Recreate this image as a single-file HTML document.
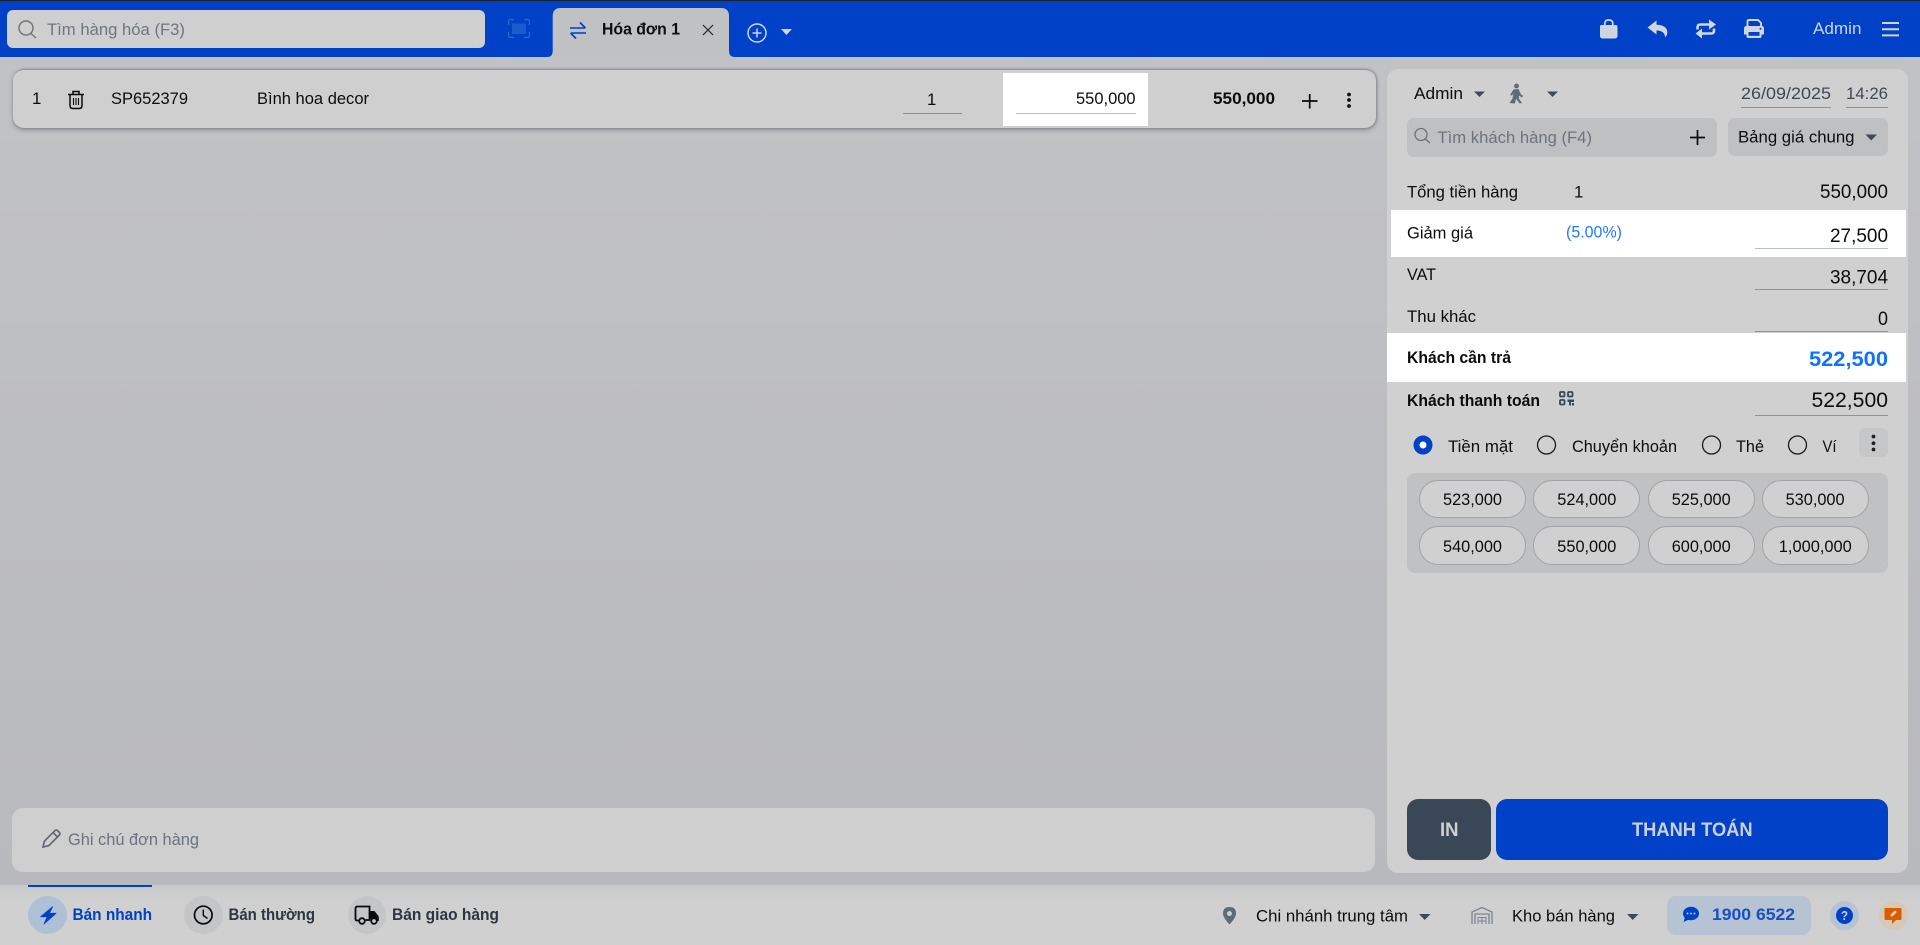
<!DOCTYPE html>
<html lang="vi"><head><meta charset="utf-8"><title>Hóa đơn 1</title>
<style>
html,body{margin:0;padding:0;width:1920px;height:945px;overflow:hidden;background:#bfc0c2}
.b{position:absolute;box-sizing:border-box}
svg{position:absolute;left:0;top:0}
text{font-family:"Liberation Sans","Noto Sans CJK SC",sans-serif;font-size:16.8px;fill:#0c0c0c}
.bd{font-weight:700}
.l{font-size:19px}
.pill{position:absolute;width:107px;height:38px;border:1px solid #a2a3a7;border-radius:19px;background:#d0d0d0;box-sizing:border-box}
.ul{position:absolute;height:1px;background:#8f9296}
</style></head><body>
<div class="b" style="left:0;top:0;width:1920px;height:885px;background:linear-gradient(#c2c3c5,#b8b9bc)"></div>
<div class="b" style="left:0;top:0;width:1920px;height:57px;background:#0041c7"></div>
<div class="b" style="left:0;top:0;width:1920px;height:1px;background:#1a2230"></div>
<div class="b" style="left:7px;top:10px;width:478px;height:38px;border-radius:6px;background:#cfcfcf"></div>

<div class="b" style="left:13px;top:69px;width:1363px;height:59px;border-radius:11px;background:#cfcfcf;border-top:1px solid #97989c;box-shadow:0 2px 4px rgba(90,92,100,.55),1px 0 2px rgba(90,92,100,.4)"></div>
<div class="b" style="left:1003px;top:73px;width:145px;height:53px;background:#fff"></div>
<div class="ul" style="left:903px;top:113px;width:59px;background:#8f9092"></div>
<div class="ul" style="left:1016px;top:113px;width:120px;background:#bebebe"></div>

<div class="b" style="left:12px;top:808px;width:1363px;height:64px;border-radius:11px;background:#cfcfcf"></div>

<div class="b" style="left:1387px;top:69px;width:521px;height:804px;border-radius:11px;background:#d0d0d0"></div>
<div class="ul" style="left:1741px;top:107px;width:90px"></div>
<div class="ul" style="left:1846px;top:107px;width:42px"></div>
<div class="b" style="left:1407px;top:118px;width:310px;height:39px;border-radius:7px;background:#bfc0c2"></div>
<div class="b" style="left:1728px;top:118px;width:160px;height:38px;border-radius:7px;background:#bfc0c2"></div>
<div class="b" style="left:1391px;top:210px;width:515px;height:47px;background:#fff"></div>
<div class="ul" style="left:1755px;top:248px;width:133px;background:#bcc0c4"></div>
<div class="ul" style="left:1755px;top:289px;width:133px"></div>
<div class="ul" style="left:1755px;top:331px;width:133px"></div>
<div class="b" style="left:1387px;top:333px;width:519px;height:49px;background:#fff"></div>
<div class="ul" style="left:1755px;top:415px;width:133px"></div>
<div class="b" style="left:1859px;top:428px;width:29px;height:29px;border-radius:5px;background:#c6c7c9"></div>
<div class="b" style="left:1407px;top:473px;width:481px;height:100px;border-radius:8px;background:#c0c1c3"></div>
<div class="pill" style="left:1419px;top:480px"></div>
<div class="pill" style="left:1533px;top:480px"></div>
<div class="pill" style="left:1648px;top:480px"></div>
<div class="pill" style="left:1762px;top:480px"></div>
<div class="pill" style="left:1419px;top:526px;height:39px"></div>
<div class="pill" style="left:1533px;top:526px;height:39px"></div>
<div class="pill" style="left:1648px;top:526px;height:39px"></div>
<div class="pill" style="left:1762px;top:526px;height:39px"></div>
<div class="b" style="left:1407px;top:799px;width:84px;height:61px;border-radius:11px;background:#3a4756"></div>
<div class="b" style="left:1496px;top:799px;width:392px;height:61px;border-radius:11px;background:#0041c7"></div>

<div class="b" style="left:0;top:885px;width:1920px;height:60px;background:linear-gradient(#c8c9ca,#d0d0d0 30%)"></div>
<div class="b" style="left:28px;top:885px;width:124px;height:2px;background:#0041c7"></div>
<div class="b" style="left:28px;top:896px;width:39px;height:38px;border-radius:50%;background:#aec0d6"></div>
<div class="b" style="left:184px;top:896px;width:39px;height:38px;border-radius:50%;background:#c4c5c7"></div>
<div class="b" style="left:348px;top:896px;width:38px;height:38px;border-radius:50%;background:#c4c5c7"></div>
<div class="b" style="left:1667px;top:896px;width:144px;height:39px;border-radius:9px;background:#b6c3d2"></div>
<div class="b" style="left:1830px;top:901px;width:29px;height:29px;border-radius:50%;background:#b6c3d2"></div>
<div class="b" style="left:1879px;top:901px;width:29px;height:29px;border-radius:50%;background:#d9c8b8"></div>

<svg width="1920" height="945" viewBox="0 0 1920 945">
<!-- tab -->
<path d="M548 57Q552.700 56.500 552.700 51V16Q552.700 8 560.700 8H721Q729 8 729 16V51Q729 56.500 734 57Z" fill="#c0c1c3"/>
<!-- search -->
<g fill="none" stroke="#6e747c" stroke-width="1.4"><circle cx="26" cy="28" r="7"/><path d="M31 33.500L36 38"/></g>
<text x="47" y="35" textLength="138" lengthAdjust="spacingAndGlyphs" style="fill:#6f7680">Tìm hàng hóa (F3)</text>
<!-- scan -->
<g fill="none" stroke="#2a68c8" stroke-width="1.3"><path d="M514 19.700H510Q508.700 19.700 508.700 21V25M524 19.700H528Q529.400 19.700 529.400 21V25M514 37.300H510Q508.700 37.300 508.700 36V32M524 37.300H528Q529.400 37.300 529.400 36V32"/></g>
<path d="M513 23.500V34M515 23.500V34M517 23.500V34M519 23.500V34M521 23.500V34M523 23.500V34M525 23.500V34" stroke="#3f78d6" stroke-width=".9" fill="none"/>
<!-- tab content -->
<g fill="none" stroke="#0041c7" stroke-width="1.600"><path d="M570 28H585M580 22.500L585.500 28M586 33H571M576 38.500L570.500 33"/></g>
<text class="bd" x="602" y="34.500" textLength="78" lengthAdjust="spacingAndGlyphs">Hóa đơn 1</text>
<path d="M703 25L713 35M713 25L703 35" stroke="#222" stroke-width="1.200" fill="none"/>
<g fill="none" stroke="#cdd6ea" stroke-width="1.500"><circle cx="757" cy="33" r="9"/><path d="M752.500 33H761.500M757 28.500V37.500"/></g>
<path d="M781 29H792L786.500 35Z" fill="#cdd6ea"/>
<!-- top right -->
<path d="M1601 25H1616Q1617.500 25 1617.500 27V36Q1617.500 38.500 1614.500 38.500H1603Q1600 38.500 1600 36V27Q1600 25 1601 25Z" fill="#d0d5de"/>
<path d="M1604.800 27V23.500Q1604.800 20 1608.800 20Q1612.800 20 1612.800 23.500V27" fill="none" stroke="#d0d5de" stroke-width="1.700"/>
<path d="M1647.500 27.500L1656.500 20.500V24.800C1663 24.800 1667.300 27.500 1667.300 32.500C1667.300 34.500 1666.500 36 1665 37.500C1665.200 33.500 1662.500 30.500 1656.500 30.500V34.500Z" fill="#d0d5de"/>
<g fill="none" stroke="#d0d5de" stroke-width="2.600"><path d="M1697.500 29.500V27.500Q1697.500 24.500 1700.500 24.500H1710"/><path d="M1714 28.500V30.500Q1714 33.500 1711 33.500H1701"/></g>
<path d="M1709 19.500L1716 24.500L1709 29.500ZM1702 28.500L1695.500 33.500L1702 38.500Z" fill="#d0d5de"/>
<path d="M1747.500 27V21.500Q1747.500 20 1749 20H1758L1761 23V27" fill="none" stroke="#d0d5de" stroke-width="1.900"/>
<path d="M1746.500 26H1761.500Q1764 26 1764 28.500V34.500H1761.500V36.500Q1761.500 38 1760 38H1748Q1746.500 38 1746.500 36.500V34.500H1744V28.500Q1744 26 1746.500 26Z" fill="#d0d5de"/>
<rect x="1748.500" y="32" width="11" height="3.800" fill="#0041c7"/>
<circle cx="1760.500" cy="28.800" r="1" fill="#0041c7"/>
<text x="1813" y="34" textLength="48.500" lengthAdjust="spacingAndGlyphs" style="fill:#c9d4ea">Admin</text>
<path d="M1882 23H1899M1882 29.200H1899M1882 35.400H1899" stroke="#d0d5de" stroke-width="2"/>
<!-- row -->
<text x="32" y="104">1</text>
<g fill="none" stroke="#0a0a0a" stroke-width="1.500"><path d="M68 94.500H84M73 94V91.500H79V94M70 95V105.500Q70 108.500 73 108.500H79Q82 108.500 82 105.500V95"/><path d="M73.500 98V105M76 98V105M78.500 98V105" stroke-width="1.100"/></g>
<text x="111" y="104" textLength="77" lengthAdjust="spacingAndGlyphs">SP652379</text>
<text x="257" y="104" textLength="112" lengthAdjust="spacingAndGlyphs">Bình hoa decor</text>
<text x="927" y="105">1</text>
<text x="1076" y="104" textLength="59.600" lengthAdjust="spacingAndGlyphs">550,000</text>
<text class="bd" x="1213" y="104" textLength="62" lengthAdjust="spacingAndGlyphs">550,000</text>
<path d="M1302 101H1317.500M1309.700 94V108.500" stroke="#0a0a0a" stroke-width="1.700"/>
<g fill="#111"><circle cx="1349" cy="94.500" r="1.900"/><circle cx="1349" cy="100" r="1.900"/><circle cx="1349" cy="106" r="1.900"/></g>
<!-- panel head -->
<text x="1414" y="99" textLength="49" lengthAdjust="spacingAndGlyphs">Admin</text>
<path d="M1474 91.500H1485L1479.500 97Z" fill="#3f4a58"/>
<circle cx="1516.500" cy="86" r="2.400" fill="#5f6b78"/>
<path d="M1513.500 89.500L1518.500 89L1521 94.500L1523 95.800L1522 97.500L1519 95.500L1518.800 98.500L1522 103L1519.800 103.500L1516 98.800L1514.800 103.500L1509.500 103L1512.500 98.500L1513.500 93.500L1512 95.500L1510 95Z" fill="#5f6b78"/>
<path d="M1547 91.500H1558L1552.500 97Z" fill="#3f4a58"/>
<text x="1741" y="99" textLength="90" lengthAdjust="spacingAndGlyphs" style="fill:#3f4854">26/09/2025</text>
<text x="1846" y="99" textLength="42" lengthAdjust="spacingAndGlyphs" style="fill:#3f4854">14:26</text>
<g fill="none" stroke="#6e747c" stroke-width="1.300"><circle cx="1421" cy="134.500" r="6"/><path d="M1425.500 139L1430 143"/></g>
<text x="1437.500" y="142.800" textLength="154.500" lengthAdjust="spacingAndGlyphs" style="fill:#6c7380">Tìm khách hàng (F4)</text>
<path d="M1690 137.500H1705M1697.500 130V145" stroke="#0a0a0a" stroke-width="1.700"/>
<text x="1738" y="142.500" textLength="116.500" lengthAdjust="spacingAndGlyphs">Bảng giá chung</text>
<path d="M1865.500 134.500H1877L1871.200 140.500Z" fill="#3f4a58"/>
<!-- totals -->
<text x="1407" y="197.500" textLength="111" lengthAdjust="spacingAndGlyphs">Tổng tiền hàng</text>
<text x="1574" y="197.500">1</text>
<text class="l" x="1820" y="198" textLength="68" lengthAdjust="spacingAndGlyphs">550,000</text>
<text x="1407" y="238.500" textLength="66" lengthAdjust="spacingAndGlyphs">Giảm giá</text>
<text x="1566" y="237.500" textLength="56" lengthAdjust="spacingAndGlyphs" style="fill:#1f7bff">(5.00%)</text>
<text class="l" x="1830" y="242" textLength="58" lengthAdjust="spacingAndGlyphs">27,500</text>
<text x="1407" y="280" textLength="29" lengthAdjust="spacingAndGlyphs">VAT</text>
<text class="l" x="1830" y="283.500" textLength="58" lengthAdjust="spacingAndGlyphs">38,704</text>
<text x="1407" y="322" textLength="69" lengthAdjust="spacingAndGlyphs">Thu khác</text>
<text class="l" x="1878" y="325" textLength="10" lengthAdjust="spacingAndGlyphs">0</text>
<text class="bd" x="1407" y="363" textLength="104" lengthAdjust="spacingAndGlyphs">Khách cần trả</text>
<text class="bd" x="1809" y="366" textLength="79" lengthAdjust="spacingAndGlyphs" style="font-size:21.600px;fill:#0d72ff">522,500</text>
<text class="bd" x="1407" y="406" textLength="133" lengthAdjust="spacingAndGlyphs">Khách thanh toán</text>
<g fill="none" stroke="#3a4756" stroke-width="1.800"><rect x="1560" y="392" width="4.500" height="4.500" rx="1"/><rect x="1568" y="392" width="4.500" height="4.500" rx="1"/><rect x="1560" y="400" width="4.500" height="4.500" rx="1"/></g>
<path d="M1567.500 399.500H1574V402H1571V405.500H1569V402H1567.500ZM1572 403H1574V405.500H1572Z" fill="#3a4756"/>
<text x="1811.500" y="407" textLength="76.500" lengthAdjust="spacingAndGlyphs" style="font-size:21px">522,500</text>
<!-- radios -->
<circle cx="1423" cy="445" r="6.500" fill="#fff" stroke="#0041c7" stroke-width="6"/>
<g fill="none" stroke="#1a1a1a" stroke-width="1.300"><circle cx="1546.500" cy="445" r="9"/><circle cx="1711.500" cy="445" r="9"/><circle cx="1797.500" cy="445" r="9"/></g>
<text x="1448" y="452" textLength="65" lengthAdjust="spacingAndGlyphs">Tiền mặt</text>
<text x="1572" y="452" textLength="105" lengthAdjust="spacingAndGlyphs">Chuyển khoản</text>
<text x="1736" y="452" textLength="28" lengthAdjust="spacingAndGlyphs">Thẻ</text>
<text x="1822.500" y="452" textLength="14" lengthAdjust="spacingAndGlyphs">Ví</text>
<g fill="#222"><circle cx="1873.500" cy="436.500" r="1.900"/><circle cx="1873.500" cy="443.300" r="1.900"/><circle cx="1873.500" cy="449.500" r="1.900"/></g>
<!-- pills -->
<text x="1443" y="505" textLength="59" lengthAdjust="spacingAndGlyphs">523,000</text>
<text x="1557.300" y="505" textLength="59" lengthAdjust="spacingAndGlyphs">524,000</text>
<text x="1671.700" y="505" textLength="59" lengthAdjust="spacingAndGlyphs">525,000</text>
<text x="1785.600" y="505" textLength="59" lengthAdjust="spacingAndGlyphs">530,000</text>
<text x="1443" y="552" textLength="59" lengthAdjust="spacingAndGlyphs">540,000</text>
<text x="1557.300" y="552" textLength="59" lengthAdjust="spacingAndGlyphs">550,000</text>
<text x="1671.700" y="552" textLength="59" lengthAdjust="spacingAndGlyphs">600,000</text>
<text x="1778.800" y="552" textLength="73" lengthAdjust="spacingAndGlyphs">1,000,000</text>
<!-- buttons -->
<text class="bd" x="1440" y="836" textLength="18.500" lengthAdjust="spacingAndGlyphs" style="font-size:19.200px;fill:#cfd0d2">IN</text>
<text class="bd" x="1632" y="836" textLength="120.600" lengthAdjust="spacingAndGlyphs" style="font-size:19.200px;fill:#c9d0dc">THANH TOÁN</text>
<!-- note -->
<path d="M43 847L44.500 841L55 830.500Q56.500 829.500 58 831L59.500 832.500Q60.500 834 59.500 835L49 845.500Z" fill="none" stroke="#5f6772" stroke-width="1.600"/>
<path d="M53 832.500L58 837.500" stroke="#5f6772" stroke-width="1.600"/>
<text x="68" y="845" textLength="131" lengthAdjust="spacingAndGlyphs" style="fill:#6b7280">Ghi chú đơn hàng</text>
<!-- bottom -->
<path d="M52.700 906.700L40.700 916.700H47.300L44 924L56 913.300H49.300Z" fill="#0041c7" stroke="#0041c7" stroke-width=".8" stroke-linejoin="round"/>
<text class="bd" x="72.500" y="920" textLength="79.500" lengthAdjust="spacingAndGlyphs" style="fill:#0041c7">Bán nhanh</text>
<g fill="none" stroke="#0a0a0a" stroke-width="1.700"><circle cx="203.300" cy="915" r="8.800"/><path d="M203.300 909.500V915.500L207.500 918.500" stroke-width="1.400"/></g>
<text class="bd" x="228.500" y="920" textLength="86.500" lengthAdjust="spacingAndGlyphs" style="fill:#2e3642">Bán thường</text>
<g fill="none" stroke="#0a0a0a" stroke-width="1.800"><path d="M358.500 920.500H357Q355.500 920.500 355.500 919V908.500Q355.500 906.500 357.500 906.500H369.500V920H365.500"/><circle cx="362" cy="921" r="2.800"/><circle cx="374" cy="921" r="2.800"/></g>
<path d="M370 911H374.500L378.800 916.500V921H377Q375.500 918 373.500 918Q371.500 918 370 919.500Z" fill="#0a0a0a"/>
<text class="bd" x="392" y="920" textLength="107" lengthAdjust="spacingAndGlyphs" style="fill:#2e3642">Bán giao hàng</text>
<path d="M1229.500 907Q1223 907 1223 913.500Q1223 917.500 1229.500 924.500Q1236 917.500 1236 913.500Q1236 907 1229.500 907ZM1229.500 911A2.500 2.500 0 1 1 1229.400 916A2.500 2.500 0 1 1 1229.500 911Z" fill="#5e6a78" fill-rule="evenodd"/>
<text x="1256" y="921.300" textLength="152" lengthAdjust="spacingAndGlyphs">Chi nhánh trung tâm</text>
<path d="M1419 914H1430.500L1424.700 920Z" fill="#3f4a58"/>
<g fill="none" stroke="#7a8490" stroke-width="1.300"><path d="M1472 924V912L1482 907.500L1492 912V924"/><path d="M1475 924V914H1489V924"/><path d="M1478 924V917.500H1486V924M1482 917.500V924M1478 921H1486" stroke-width="1"/></g>
<text x="1512" y="921.300" textLength="103" lengthAdjust="spacingAndGlyphs">Kho bán hàng</text>
<path d="M1627 914H1638.500L1632.700 920Z" fill="#3f4a58"/>
<ellipse cx="1691" cy="913.500" rx="8" ry="6.800" fill="#0041c7"/>
<path d="M1685 917L1683.500 922L1689 919.500Z" fill="#0041c7"/>
<g fill="#b6c3d2"><circle cx="1687.500" cy="913.500" r="1"/><circle cx="1691" cy="913.500" r="1"/><circle cx="1694.500" cy="913.500" r="1"/></g>
<text class="bd" x="1712" y="920" textLength="83" lengthAdjust="spacingAndGlyphs" style="fill:#1a4fc4">1900 6522</text>
<circle cx="1844.500" cy="915.500" r="8.500" fill="#0041c7"/>
<text class="bd" x="1841" y="920" textLength="7" lengthAdjust="spacingAndGlyphs" style="font-size:13px;fill:#d0d5de">?</text>
<path d="M1885.500 908H1900.500Q1901.500 908 1901.500 909V919Q1901.500 920 1900.500 920H1896L1892 924V920H1885.500Q1884.500 920 1884.500 919V909Q1884.500 908 1885.500 908Z" fill="#d95e00"/>
<path d="M1890.500 916.500L1891 914L1895 910.500L1896.800 912L1893 916Z" fill="#e8d5c4"/>
</svg>
</body></html>
